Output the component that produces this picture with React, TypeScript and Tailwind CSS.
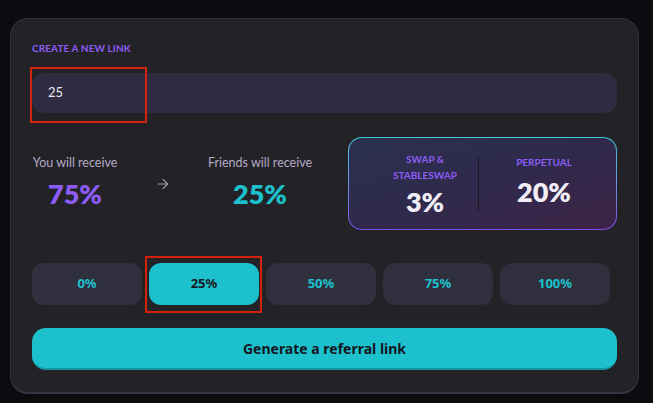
import { ArrowRight } from "lucide-react"

const OPTIONS = ["0%", "25%", "50%", "75%", "100%"]
const SELECTED = "25%"

export default function App() {
  return (
    <div className="relative w-[653px] h-[403px] bg-[#0c0b10] pt-[18px] pl-[10px] font-['Lato','Noto_Sans',sans-serif]">
      <div className="w-[629px] rounded-[18px] bg-[#232227] border border-[#33303d] border-b-2 border-b-[#383444] px-[21px] pt-[23px] pb-[22px]">
        {/* Header */}
        <div className="text-[10px] leading-[12px] font-bold tracking-[0.01em] text-[#8d5cf6] uppercase">
          Create a new link
        </div>

        {/* Input */}
        <div className="mt-[19px] h-[40px] rounded-[12px] bg-[#2f2b40] flex items-center px-4 text-[13px] text-[#ece9f4]">
          25
        </div>

        {/* Receive stats */}
        <div className="mt-[24px] flex items-center">
          <div className="w-[86px] flex flex-col items-center -mt-[2px]">
            <span className="text-[12.5px] leading-[14px] text-[#b3abc4] whitespace-nowrap">You will receive</span>
            <span className="mt-[9px] text-[27px] leading-[30px] font-extrabold text-[#8d5cf6]">75%</span>
          </div>
          <ArrowRight className="ml-[37px] w-[16px] h-[16px] text-[#a8a1b9]" strokeWidth={1.6} />
          <div className="ml-[36px] w-[106px] flex flex-col items-center -mt-[2px]">
            <span className="text-[12.5px] leading-[14px] text-[#b3abc4] whitespace-nowrap">Friends will receive</span>
            <span className="mt-[9px] text-[27px] leading-[30px] font-extrabold text-[#1cc1cd]">25%</span>
          </div>

          <div className="ml-auto w-[269px] h-[93px] rounded-[14px] p-px bg-gradient-to-b from-[#40c9d6] to-[#7b4ce6]">
            <div className="h-full rounded-[13px] bg-gradient-to-br from-[#2b3050] via-[#2f2a4c] to-[#3d2347] flex items-center justify-center">
              <div className="w-[66px] flex flex-col items-center">
                <span className="text-[10px] leading-[16px] font-bold text-[#8d5cf6] text-center">SWAP &amp;<br />STABLESWAP</span>
                <span className="mt-[4px] text-[27px] leading-[30px] font-extrabold text-[#f1eef8]">3%</span>
              </div>
              <div className="ml-[20px] mr-[36px] w-px h-[54px] bg-[#1b1a24]" />
              <div className="w-[58px] flex flex-col items-center -mt-[4px]">
                <span className="text-[10px] leading-[12px] font-bold text-[#8d5cf6]">PERPETUAL</span>
                <span className="mt-[9px] text-[27px] leading-[30px] font-extrabold text-[#f1eef8]">20%</span>
              </div>
            </div>
          </div>
        </div>

        {/* Percentage options */}
        <div className="mt-[33px] flex gap-[7px]">
          {OPTIONS.map((o) => (
            <button
              key={o}
              className={
                o === SELECTED
                  ? "w-[110px] h-[42px] rounded-[12px] bg-[#1cc1cd] text-[#15171f] text-[13px] font-bold font-['Noto_Sans',sans-serif]"
                  : "w-[110px] h-[42px] rounded-[12px] bg-[#302f3d] text-[#1cc1cd] text-[13px] font-bold font-['Noto_Sans',sans-serif]"
              }
            >
              {o}
            </button>
          ))}
        </div>

        {/* Generate */}
        <button className="mt-[23px] w-full h-[42px] rounded-[14px] bg-[#1cc1cd] border-b-2 border-[#1596a3] text-[14px] font-bold font-['Noto_Sans',sans-serif] text-[#15171f]">
          Generate a referral link
        </button>
      </div>

      {/* annotation boxes */}
      <div className="absolute left-[30px] top-[67px] w-[117px] h-[56px] border-2 border-[#d4230c]" />
      <div className="absolute left-[145px] top-[256px] w-[117px] h-[57px] border-2 border-[#d4230c]" />
    </div>
  )
}
